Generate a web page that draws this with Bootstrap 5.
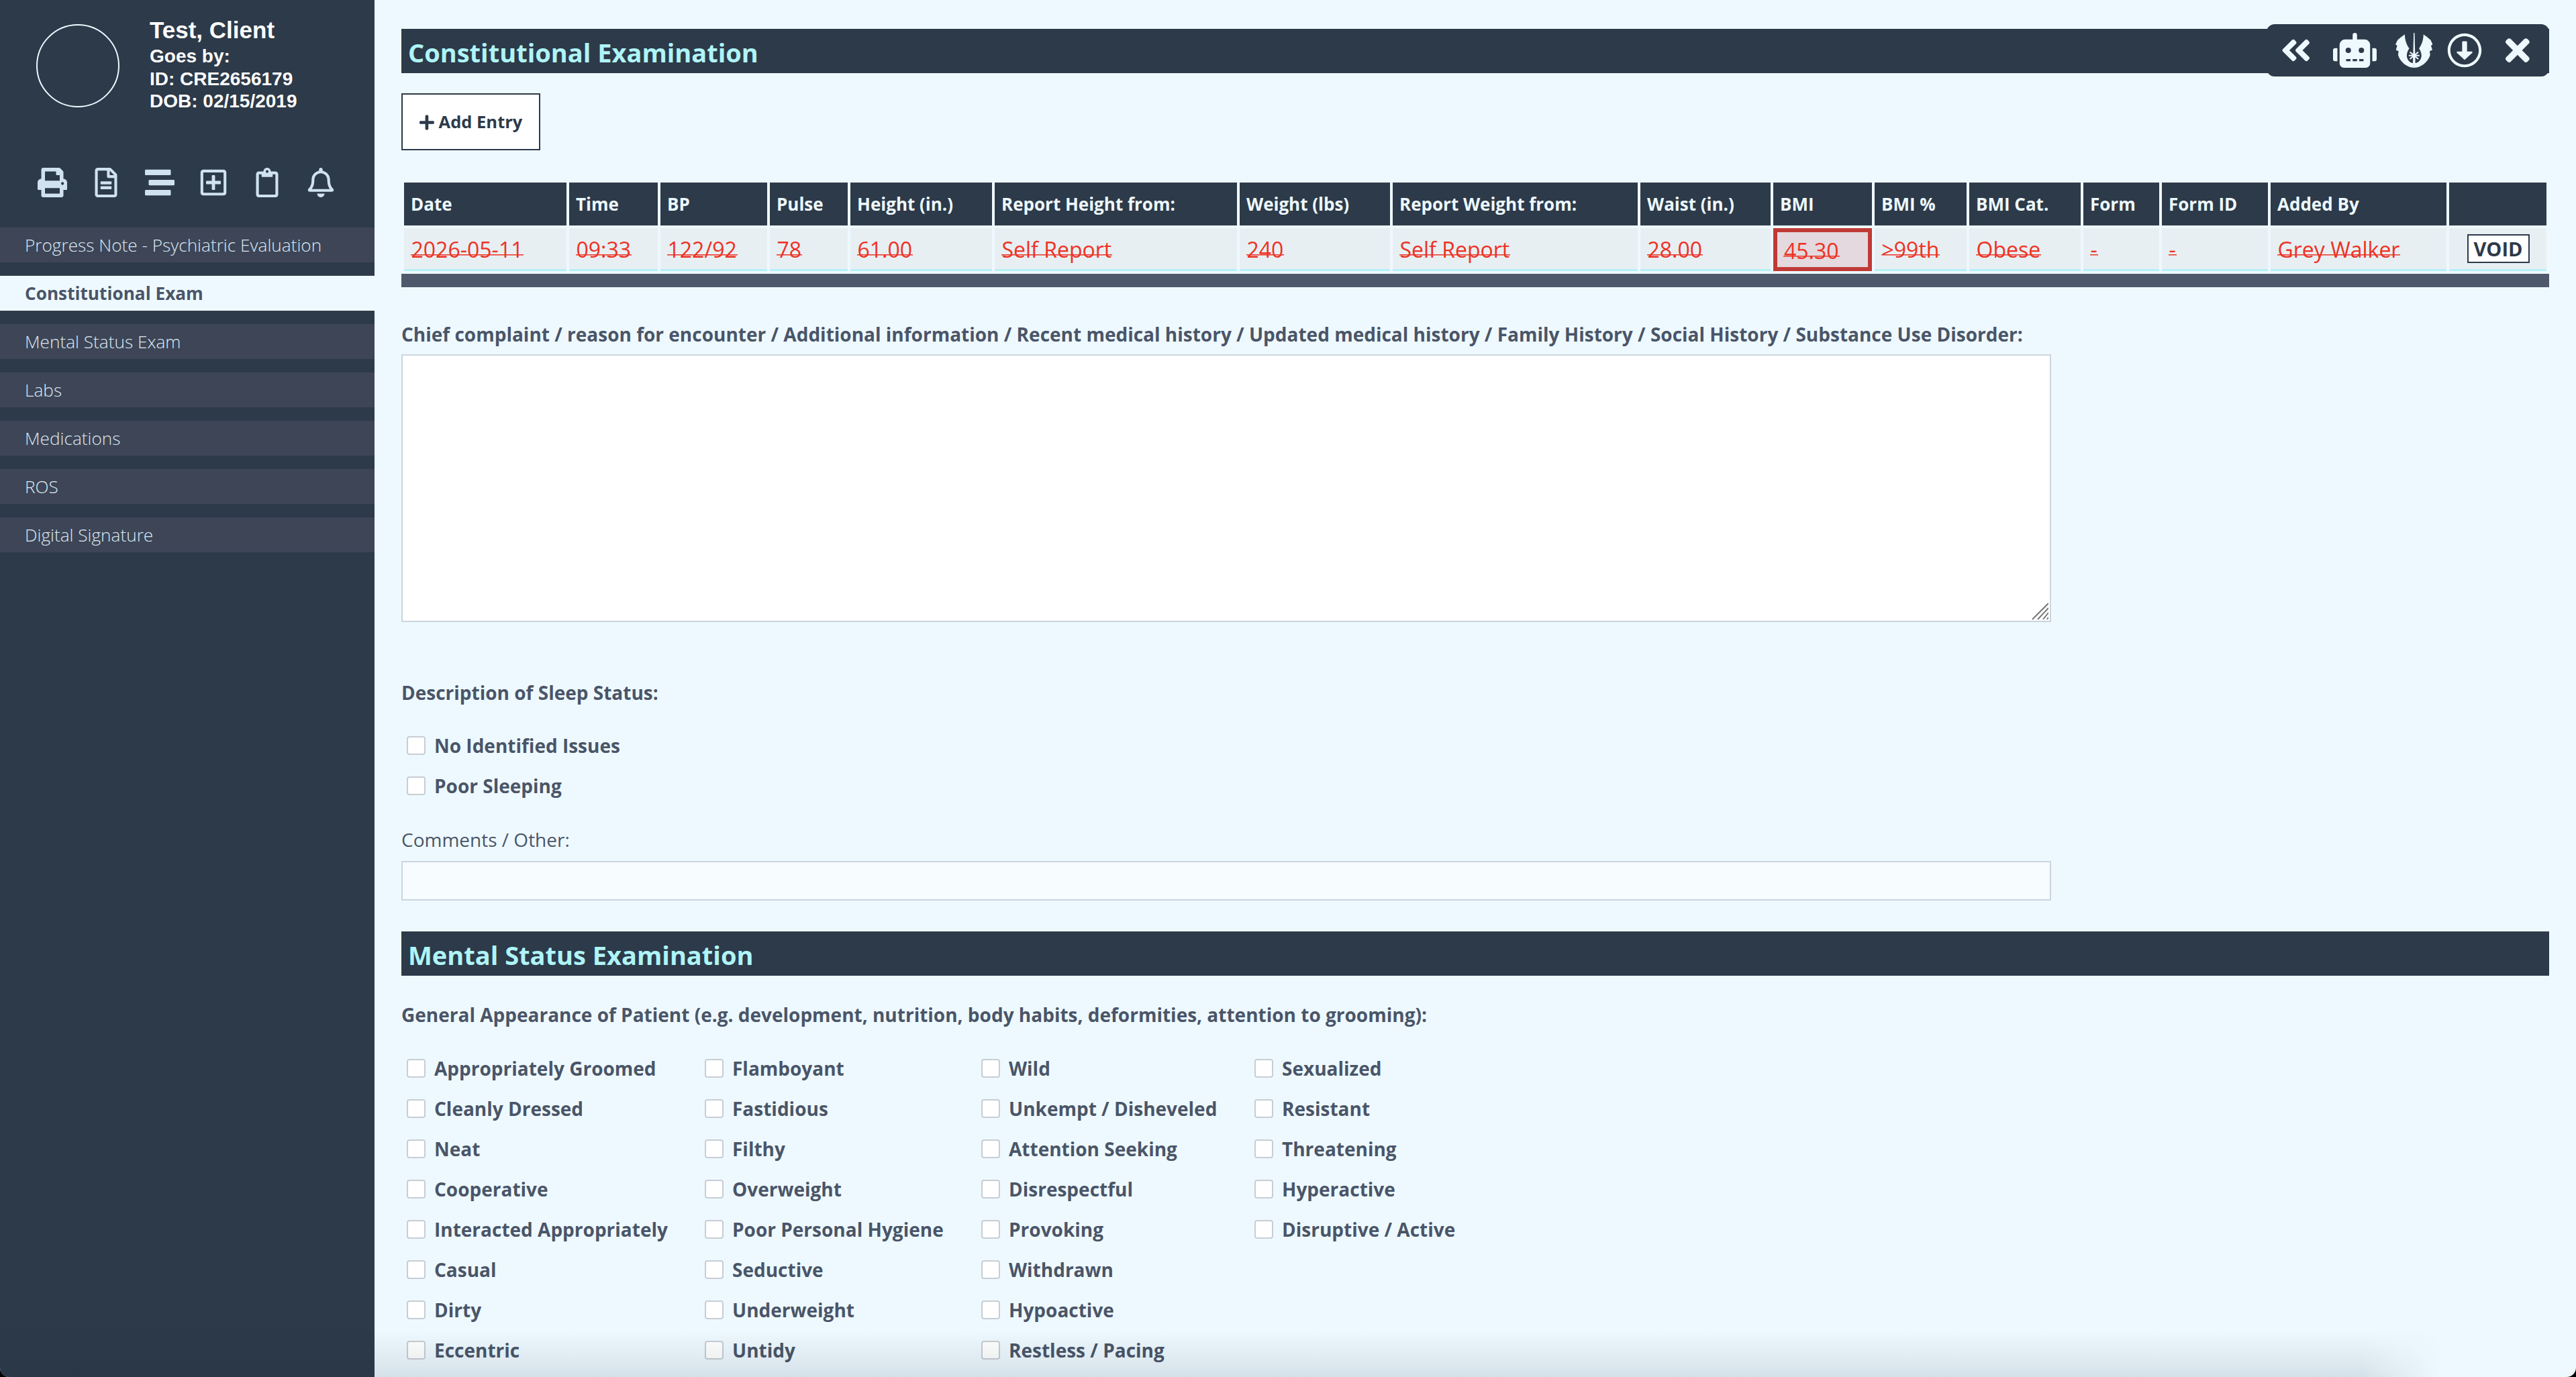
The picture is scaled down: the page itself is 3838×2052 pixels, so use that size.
<!DOCTYPE html>
<html lang="en">
<head>
    <meta charset="UTF-8">
    <meta name="viewport" content="width=device-width, initial-scale=1">
    <title>Constitutional Examination</title>
    <link href="https://cdn.jsdelivr.net/npm/bootstrap@5.3.0/dist/css/bootstrap.min.css" rel="stylesheet">
    <style>
        html, body { height: 100%; margin: 0; background: #000; overflow: hidden; }
        .app-frame { position: relative; height: 2052px; overflow: hidden; background: #eef9ff; border-radius: 0 0 14px 14px; font-family: "Open Sans", sans-serif; color: #4a5568; }

        /* sidebar */
        .side-panel { width: 558px; flex: none; background: #2d3a49; }
        .patient-box { padding: 36px 0 0 54px; gap: 45px; height: 250px; color: #fff; font-family: "Liberation Sans", Arial, sans-serif; font-weight: 700; font-size: 28px; line-height: 33.5px; }
        .avatar-ring { width: 124px; height: 124px; border: 2px solid #eef9ff; border-radius: 50%; flex: none; }
        .patient-name { font-size: 35px; line-height: 42px; margin-top: -12px; }
        .patient-line { margin-top: 1px; }
        .side-tools { padding-left: 38px; height: 89px; }
        .side-tool { width: 80px; height: 44px; fill: #cfe2ee; }
        .side-nav .nav-link { height: 52px; margin-bottom: 20px; padding: 0 0 0 37px; background: #3d4557; color: #dbe9f2; font-size: 26.2px; font-weight: 300; line-height: 52px; }
        .side-nav .nav-link.active { background: #eef9ff; color: #4a5568; font-weight: 700; }

        /* main column */
        .main-col { flex: 1; min-width: 0; padding: 43px 40px 0; }
        .section-bar { height: 66px; margin: 0; padding-left: 10px; background: #2d3a49; color: #aff4f7; font-size: 38px; font-weight: 700; line-height: 70px; }
        .add-btn { width: 207px; height: 85px; margin: 30px 0 44px; padding: 0; border: 2px solid #2d3a49; border-radius: 0; background: #fff; color: #2d3a49; font-size: 25.5px; font-weight: 700; --bs-btn-hover-bg: #fff; }
        .add-btn svg { height: 25px; margin-right: 7px; fill: #2d3a49; vertical-align: -4px; }

        .exam-table { width: 3200px; margin: 0; table-layout: fixed; border-collapse: separate; border-spacing: 4px; }
        .exam-table thead th { height: 64px; padding: 0 10px; border: 0; background: #2d3a49; color: #eef9ff; font-size: 26px; font-weight: 700; vertical-align: middle; }
        .exam-table tbody td { height: 64px; padding: 3px 10.5px 0; border: 0; border-bottom: 3px solid #b3f1f7; background: #e7eff3; color: #ee3224; font-size: 32px; vertical-align: middle; }
        .exam-table tbody td.bmi-flag { padding: 3px 10px 0; border: 6px solid #c03a36; background: #e3d9de; }
        /* strike sits low in the original, so it is a drawn line rather than line-through */
        .void-text { padding: 0 1px; margin: 0 -1px; text-decoration: none; background: linear-gradient(currentColor, currentColor) no-repeat 0 29px / 100% 1.5px; }
        .void-btn { display: block; width: 93px; height: 43px; margin: -3px 0 0 16px; padding: 0; border: 2px solid #2d3a49; border-radius: 0; background: #fff; color: #2d3a49; font-size: 29px; font-weight: 700; line-height: 37px; }
        .table-foot { height: 20px; background: #4e596b; }

        .field-title { margin: 0; font-size: 28px; font-weight: 700; line-height: 40px; }
        .complaint-title { margin: 50px 0 10px; }
        .sleep-title { margin: 85px 0 45px; }
        .appearance-title { margin: 38px 0 46px; }
        .plain-title { margin: 46px 0 12px; font-size: 28px; line-height: 40px; }
        .wide-field { width: 2458px; border: 2px solid #cbd5e0; border-radius: 0; }
        .complaint-wrap { width: 2458px; }
        textarea.wide-field { height: 399px; background: #fff; resize: none; }
        input.wide-field { height: 59px; background: #f6fcff; }
        .size-grip { position: absolute; right: 4px; bottom: 3px; width: 25px; height: 26px; stroke: #777; stroke-width: 2; pointer-events: none; }

        .tick-row { height: 28px; margin: 0 0 32px 8px; padding: 0; gap: 13px; font-size: 28px; font-weight: 700; line-height: 28px; white-space: nowrap; }
        .tick-row .form-check-input { width: 28px; height: 28px; margin: 0; float: none; flex: none; border: 2px solid #c8cdd5; border-radius: 4px; background-color: #fff; }
        .tick-col-a { width: 444px; }
        .tick-col-b { width: 412px; }
        .tick-col-c { width: 407px; }
        .section-gap { margin-top: 46px; }

        /* floating toolbar over the first header */
        .float-tools { position: absolute; top: 36px; right: 40px; width: 421px; height: 78px; padding-left: 21px; border-radius: 12px; background: #2d3a49; }
        .float-tools svg { height: 52px; fill: #eef9ff; stroke: none; flex: none; }
        .float-tools svg:nth-child(2) { margin-left: 32px; }
        .float-tools svg:nth-child(3) { margin-left: 28px; }
        .float-tools svg:nth-child(4) { margin-left: 22px; }
        .float-tools svg:nth-child(5) { margin-left: 35px; }
        .jedi-rays { stroke: #eef9ff; stroke-width: 6; fill: none; }

        .bottom-fade { position: absolute; left: 0; right: 0; bottom: 0; height: 70px; pointer-events: none; background: linear-gradient(to top, rgba(20,40,50,.11), rgba(20,40,50,0)); -webkit-mask-image: linear-gradient(to right, #000 3520px, transparent 3640px); mask-image: linear-gradient(to right, #000 3520px, transparent 3640px); }
    </style>
</head>
<body>
<div class="app-frame d-flex">
    <aside class="side-panel">
        <div class="patient-box d-flex">
            <div class="avatar-ring"></div>
            <div>
                <div class="patient-name">Test, Client</div>
                <div class="patient-line">Goes by:</div>
                <div>ID: CRE2656179</div>
                <div>DOB: 02/15/2019</div>
            </div>
        </div>
        <div class="side-tools d-flex">
            <svg class="side-tool" viewBox="0 0 512 512"><path d="M448 192V77.25c0-8.49-3.37-16.62-9.37-22.63L393.37 9.37c-6-6-14.14-9.37-22.63-9.37H96C78.33 0 64 14.33 64 32v160c-35.35 0-64 28.65-64 64v112c0 8.84 7.16 16 16 16h48v96c0 17.67 14.33 32 32 32h320c17.67 0 32-14.33 32-32v-96h48c8.84 0 16-7.16 16-16V256c0-35.35-28.65-64-64-64zm-64 256H128v-96h256v96zm0-224H128V64h192v48c0 8.84 7.16 16 16 16h48v96zm48 72c-13.25 0-24-10.75-24-24 0-13.26 10.75-24 24-24s24 10.74 24 24c0 13.25-10.75 24-24 24z"/></svg>
            <svg class="side-tool" viewBox="0 0 384 512"><path d="M288 248v28c0 6.6-5.4 12-12 12H108c-6.6 0-12-5.4-12-12v-28c0-6.6 5.4-12 12-12h168c6.6 0 12 5.4 12 12zm-12 72H108c-6.6 0-12 5.4-12 12v28c0 6.6 5.4 12 12 12h168c6.6 0 12-5.4 12-12v-28c0-6.6-5.4-12-12-12zm108-188.1V464c0 26.5-21.5 48-48 48H48c-26.5 0-48-21.5-48-48V48C0 21.5 21.5 0 48 0h204.1C264.8 0 277 5.1 286 14.1L369.9 98c9 8.9 14.1 21.2 14.1 33.9zm-128-80V128h76.1L256 51.9zM336 464V176H232c-13.3 0-24-10.7-24-24V48H48v416h288z"/></svg>
            <svg class="side-tool" viewBox="0 0 512 512"><path d="M16 128h416c8.84 0 16-7.16 16-16V48c0-8.84-7.16-16-16-16H16C7.16 32 0 39.16 0 48v64c0 8.84 7.16 16 16 16zm480 80H80c-8.84 0-16 7.16-16 16v64c0 8.84 7.16 16 16 16h416c8.84 0 16-7.16 16-16v-64c0-8.84-7.16-16-16-16zm-64 176H16c-8.84 0-16 7.16-16 16v64c0 8.84 7.16 16 16 16h416c8.84 0 16-7.16 16-16v-64c0-8.84-7.16-16-16-16z"/></svg>
            <svg class="side-tool" viewBox="0 0 448 512"><path d="M352 240v32c0 6.6-5.4 12-12 12h-88v88c0 6.6-5.4 12-12 12h-32c-6.6 0-12-5.4-12-12v-88h-88c-6.6 0-12-5.4-12-12v-32c0-6.6 5.4-12 12-12h88v-88c0-6.6 5.4-12 12-12h32c6.6 0 12 5.4 12 12v88h88c6.6 0 12 5.4 12 12zm96-160v352c0 26.5-21.5 48-48 48H48c-26.5 0-48-21.5-48-48V80c0-26.5 21.5-48 48-48h352c26.5 0 48 21.5 48 48zm-48 346V86c0-3.3-2.7-6-6-6H54c-3.3 0-6 2.7-6 6v340c0 3.3 2.7 6 6 6h340c3.3 0 6-2.7 6-6z"/></svg>
            <svg class="side-tool" viewBox="0 0 384 512"><path d="M336 64h-80c0-35.3-28.7-64-64-64s-64 28.7-64 64H48C21.5 64 0 85.5 0 112v352c0 26.5 21.5 48 48 48h288c26.5 0 48-21.5 48-48V112c0-26.5-21.5-48-48-48zM192 40c13.3 0 24 10.7 24 24s-10.7 24-24 24-24-10.7-24-24 10.7-24 24-24zm144 418c0 3.3-2.7 6-6 6H54c-3.3 0-6-2.7-6-6V118c0-3.3 2.7-6 6-6h42v36c0 6.6 5.4 12 12 12h168c6.6 0 12-5.4 12-12v-36h42c3.3 0 6 2.7 6 6z"/></svg>
            <svg class="side-tool" viewBox="0 0 448 512"><path d="M439.39 362.29c-19.32-20.76-55.47-51.99-55.47-154.29 0-77.7-54.48-139.9-127.94-155.16V32c0-17.67-14.32-32-31.98-32s-31.98 14.33-31.98 32v20.84C118.56 68.1 64.08 130.3 64.08 208c0 102.3-36.15 133.53-55.47 154.29-6 6.45-8.66 14.16-8.61 21.71.11 16.4 12.98 32 32.1 32h383.8c19.12 0 32-15.6 32.1-32 .05-7.55-2.61-15.27-8.61-21.71zM67.53 368c21.22-27.97 44.42-74.33 44.53-159.42 0-.2-.06-.38-.06-.58 0-61.86 50.14-112 112-112s112 50.14 112 112c0 .2-.06.38-.06.58.11 85.1 23.31 131.46 44.53 159.42H67.53zM224 512c35.32 0 63.97-28.65 63.97-64H160.03c0 35.35 28.65 64 63.97 64z"/></svg>
        </div>
        <nav class="nav flex-column side-nav">
            <a class="nav-link" href="#">Progress Note - Psychiatric Evaluation</a>
            <a class="nav-link active" href="#">Constitutional Exam</a>
            <a class="nav-link" href="#">Mental Status Exam</a>
            <a class="nav-link" href="#">Labs</a>
            <a class="nav-link" href="#">Medications</a>
            <a class="nav-link" href="#">ROS</a>
            <a class="nav-link" href="#">Digital Signature</a>
        </nav>
    </aside>

    <main class="main-col">
        <h2 class="section-bar">Constitutional Examination</h2>
        <button type="button" class="btn add-btn d-block"><svg viewBox="0 0 448 512"><path d="M416 208H272V64c0-17.67-14.33-32-32-32h-32c-17.67 0-32 14.33-32 32v144H32c-17.67 0-32 14.33-32 32v32c0 17.67 14.33 32 32 32h144v144c0 17.67 14.33 32 32 32h32c17.67 0 32-14.33 32-32V304h144c17.67 0 32-14.33 32-32v-32c0-17.67-14.33-32-32-32z"/></svg>Add Entry</button>

        <table class="table exam-table">
            <colgroup>
                <col width="242"><col width="132"><col width="159"><col width="116"><col width="211"><col width="361"><col width="224"><col width="365"><col width="194"><col width="147"><col width="137"><col width="166"><col width="113"><col width="158"><col width="262"><col width="145">
            </colgroup>
            <thead>
                <tr>
                    <th>Date</th><th>Time</th><th>BP</th><th>Pulse</th><th>Height (in.)</th><th>Report Height from:</th><th>Weight (lbs)</th><th>Report Weight from:</th><th>Waist (in.)</th><th>BMI</th><th>BMI %</th><th>BMI Cat.</th><th>Form</th><th>Form ID</th><th>Added By</th><th></th>
                </tr>
            </thead>
            <tbody>
                <tr>
                    <td><s class="void-text">2026-05-11</s></td>
                    <td><s class="void-text">09:33</s></td>
                    <td><s class="void-text">122/92</s></td>
                    <td><s class="void-text">78</s></td>
                    <td><s class="void-text">61.00</s></td>
                    <td><s class="void-text">Self Report</s></td>
                    <td><s class="void-text">240</s></td>
                    <td><s class="void-text">Self Report</s></td>
                    <td><s class="void-text">28.00</s></td>
                    <td class="bmi-flag"><s class="void-text">45.30</s></td>
                    <td><s class="void-text">&gt;99th</s></td>
                    <td><s class="void-text">Obese</s></td>
                    <td><s class="void-text">-</s></td>
                    <td><s class="void-text">-</s></td>
                    <td><s class="void-text">Grey Walker</s></td>
                    <td><button type="button" class="btn void-btn">VOID</button></td>
                </tr>
            </tbody>
        </table>
        <div class="table-foot"></div>

        <label class="field-title complaint-title d-block" for="complaint">Chief complaint / reason for encounter / Additional information / Recent medical history / Updated medical history / Family History / Social History / Substance Use Disorder:</label>
        <div class="complaint-wrap position-relative">
            <textarea id="complaint" class="form-control wide-field"></textarea>
            <svg class="size-grip" viewBox="0 0 25 26"><path d="M1 25L25 1M9 25L25 8M17 25L25 15M23 25L25 22"/></svg>
        </div>

        <p class="field-title sleep-title">Description of Sleep Status:</p>
        <label class="tick-row d-flex align-items-center"><input class="form-check-input" type="checkbox">No Identified Issues</label>
        <label class="tick-row d-flex align-items-center"><input class="form-check-input" type="checkbox">Poor Sleeping</label>

        <label class="plain-title d-block" for="sleepOther">Comments / Other:</label>
        <input id="sleepOther" type="text" class="form-control wide-field">

        <h2 class="section-bar section-gap">Mental Status Examination</h2>
        <p class="field-title appearance-title">General Appearance of Patient (e.g. development, nutrition, body habits, deformities, attention to grooming):</p>

        <div class="d-flex">
            <div class="tick-col-a">
                <label class="tick-row d-flex align-items-center"><input class="form-check-input" type="checkbox">Appropriately Groomed</label>
                <label class="tick-row d-flex align-items-center"><input class="form-check-input" type="checkbox">Cleanly Dressed</label>
                <label class="tick-row d-flex align-items-center"><input class="form-check-input" type="checkbox">Neat</label>
                <label class="tick-row d-flex align-items-center"><input class="form-check-input" type="checkbox">Cooperative</label>
                <label class="tick-row d-flex align-items-center"><input class="form-check-input" type="checkbox">Interacted Appropriately</label>
                <label class="tick-row d-flex align-items-center"><input class="form-check-input" type="checkbox">Casual</label>
                <label class="tick-row d-flex align-items-center"><input class="form-check-input" type="checkbox">Dirty</label>
                <label class="tick-row d-flex align-items-center"><input class="form-check-input" type="checkbox">Eccentric</label>
            </div>
            <div class="tick-col-b">
                <label class="tick-row d-flex align-items-center"><input class="form-check-input" type="checkbox">Flamboyant</label>
                <label class="tick-row d-flex align-items-center"><input class="form-check-input" type="checkbox">Fastidious</label>
                <label class="tick-row d-flex align-items-center"><input class="form-check-input" type="checkbox">Filthy</label>
                <label class="tick-row d-flex align-items-center"><input class="form-check-input" type="checkbox">Overweight</label>
                <label class="tick-row d-flex align-items-center"><input class="form-check-input" type="checkbox">Poor Personal Hygiene</label>
                <label class="tick-row d-flex align-items-center"><input class="form-check-input" type="checkbox">Seductive</label>
                <label class="tick-row d-flex align-items-center"><input class="form-check-input" type="checkbox">Underweight</label>
                <label class="tick-row d-flex align-items-center"><input class="form-check-input" type="checkbox">Untidy</label>
            </div>
            <div class="tick-col-c">
                <label class="tick-row d-flex align-items-center"><input class="form-check-input" type="checkbox">Wild</label>
                <label class="tick-row d-flex align-items-center"><input class="form-check-input" type="checkbox">Unkempt / Disheveled</label>
                <label class="tick-row d-flex align-items-center"><input class="form-check-input" type="checkbox">Attention Seeking</label>
                <label class="tick-row d-flex align-items-center"><input class="form-check-input" type="checkbox">Disrespectful</label>
                <label class="tick-row d-flex align-items-center"><input class="form-check-input" type="checkbox">Provoking</label>
                <label class="tick-row d-flex align-items-center"><input class="form-check-input" type="checkbox">Withdrawn</label>
                <label class="tick-row d-flex align-items-center"><input class="form-check-input" type="checkbox">Hypoactive</label>
                <label class="tick-row d-flex align-items-center"><input class="form-check-input" type="checkbox">Restless / Pacing</label>
            </div>
            <div>
                <label class="tick-row d-flex align-items-center"><input class="form-check-input" type="checkbox">Sexualized</label>
                <label class="tick-row d-flex align-items-center"><input class="form-check-input" type="checkbox">Resistant</label>
                <label class="tick-row d-flex align-items-center"><input class="form-check-input" type="checkbox">Threatening</label>
                <label class="tick-row d-flex align-items-center"><input class="form-check-input" type="checkbox">Hyperactive</label>
                <label class="tick-row d-flex align-items-center"><input class="form-check-input" type="checkbox">Disruptive / Active</label>
            </div>
        </div>
    </main>

    <div class="float-tools d-flex align-items-center">
        <svg viewBox="0 0 448 512"><path d="M223.7 239l136-136c9.4-9.4 24.6-9.4 33.9 0l22.6 22.6c9.4 9.4 9.4 24.6 0 33.9L319.9 256l96.4 96.4c9.4 9.4 9.4 24.6 0 33.9L393.7 409c-9.4 9.4-24.6 9.4-33.9 0l-136-136c-9.5-9.4-9.5-24.6-.1-34zm-192 34l136 136c9.4 9.4 24.6 9.4 33.9 0l22.6-22.6c9.4-9.4 9.4-24.6 0-33.9L127.9 256l96.4-96.4c9.4-9.4 9.4-24.6 0-33.9L201.7 103c-9.4-9.4-24.6-9.4-33.9 0l-136 136c-9.5 9.4-9.5 24.6-.1 34z"/></svg>
        <svg viewBox="0 0 640 512"><path d="M32,224H64V416H32A31.96166,31.96166,0,0,1,0,384V256A31.96166,31.96166,0,0,1,32,224Zm512-48V448a64.06328,64.06328,0,0,1-64,64H160a64.06328,64.06328,0,0,1-64-64V176a79.974,79.974,0,0,1,80-80H288V32a32,32,0,0,1,64,0V96H464A79.974,79.974,0,0,1,544,176ZM264,256a40,40,0,1,0-40,40A39.997,39.997,0,0,0,264,256Zm-8,128H192v32h64Zm96,0H288v32h64ZM456,256a40,40,0,1,0-40,40A39.997,39.997,0,0,0,456,256Zm-8,128H384v32h64ZM640,256V384a31.96166,31.96166,0,0,1-32,32H576V224h32A31.96166,31.96166,0,0,1,640,256Z"/></svg>
        <svg viewBox="0 0 168 157">
            <path d="M42,7C28,16 12,30 10,32L0,52 8,57 2,77 14,82 12,100C20,128 50,157 84,157V137C64,137 51,120 51,102 51,90 56,78 62,70 50,55 42,30 42,7Z"/>
            <path d="M126,7C140,16 156,30 158,32L168,52 160,57 166,77 154,82 156,100C148,128 118,157 84,157V137C104,137 117,120 117,102 117,90 112,78 106,70 118,55 126,30 126,7Z"/>
            <path d="M82,0h4l3.500,140h-11Z"/>
            <circle cx="84" cy="102" r="9"/>
            <path class="jedi-rays" d="M60,102H108M65,86L103,118M103,86L65,118"/>
        </svg>
        <svg viewBox="0 0 512 512"><path d="M504 256c0 137-111 248-248 248S8 393 8 256 119 8 256 8s248 111 248 248zM256 48C141.100 48 48 141.100 48 256s93.100 208 208 208 208-93.100 208-208S370.900 48 256 48z"/><path d="M232 122h48c6.600 0 12 5.400 12 12v138h68c10.700 0 16 12.900 8.500 20.500L264.500 390c-4.700 4.700-12.300 4.700-17 0l-104-97.500C136 284.900 141.300 272 152 272h68V134c0-6.600 5.400-12 12-12z"/></svg>
        <svg viewBox="0 0 352 512"><path d="M242.72 256l100.07-100.07c12.28-12.28 12.28-32.19 0-44.48l-22.24-22.24c-12.28-12.28-32.19-12.28-44.48 0L176 189.28 75.93 89.21c-12.28-12.28-32.19-12.28-44.48 0L9.21 111.45c-12.28 12.28-12.28 32.19 0 44.48L109.28 256 9.21 356.07c-12.28 12.28-12.28 32.19 0 44.48l22.24 22.24c12.28 12.28 32.2 12.28 44.48 0L176 322.72l100.07 100.07c12.28 12.28 32.2 12.28 44.48 0l22.24-22.24c12.28-12.28 12.28-32.19 0-44.48L242.72 256z"/></svg>
    </div>
    <div class="bottom-fade"></div>
</div>
<script src="https://cdn.jsdelivr.net/npm/bootstrap@5.3.0/dist/js/bootstrap.bundle.min.js"></script>
</body>
</html>
